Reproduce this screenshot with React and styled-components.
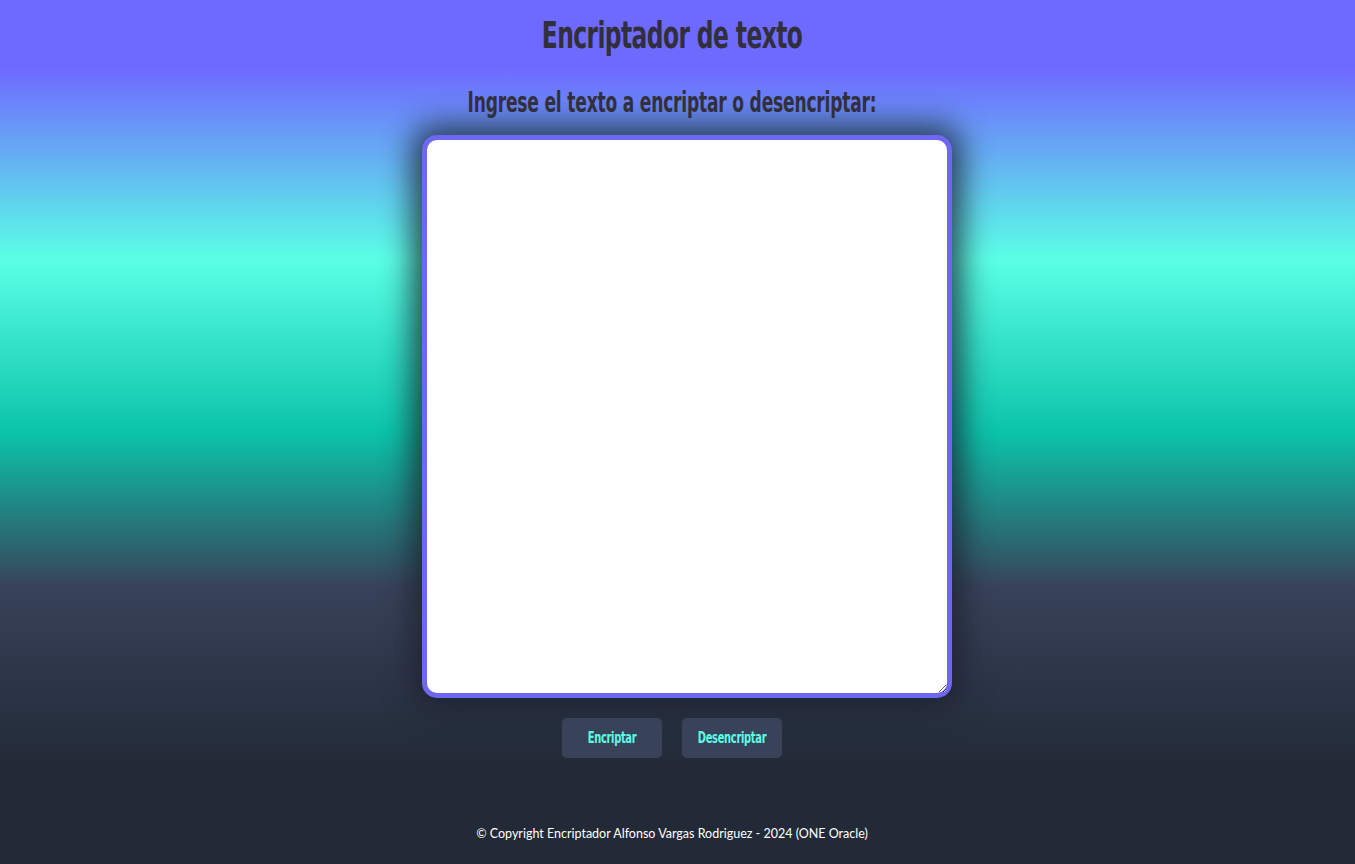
import React, { useState } from 'react'
import styled, { createGlobalStyle } from 'styled-components'

const GlobalStyle = createGlobalStyle`
  html, body {
    margin: 0;
    padding: 0;
  }
  body {
    min-height: 864px;
    background: linear-gradient(
      180deg,
      #6f6aff 0%,
      #6f6aff 8%,
      #5affe5 30%,
      #0bc4aa 50%,
      #384259 68%,
      #222a37 89%,
      #222a37 100%
    );
    background-attachment: fixed;
    font-family: "Lato", "Open Sans", sans-serif;
  }
`

const Page = styled.main`
  display: flex;
  flex-direction: column;
  align-items: center;
  min-height: 864px;
  box-sizing: border-box;
  padding: 14px 11px 0 0;
`

const Title = styled.h1`
  margin: 0;
  font-family: "DejaVu Sans Condensed", sans-serif;
  font-weight: 700;
  font-size: 26px;
  line-height: 42px;
  color: #302f3b;
  letter-spacing: -0.6px;
  transform: scaleY(1.42);
`

const Subtitle = styled.h2`
  margin: 30px 0 0;
  font-family: "DejaVu Sans Condensed", sans-serif;
  font-weight: 700;
  font-size: 19px;
  line-height: 32px;
  color: #302f3b;
  letter-spacing: -0.2px;
  transform: scaleY(1.45);
`

const TextBox = styled.textarea`
  margin: 17px 0 0 30px;
  width: 530px;
  height: 563px;
  box-sizing: border-box;
  border: 5px solid #6d67f2;
  border-radius: 15px;
  background: #fff;
  padding: 10px;
  font-family: "Lato", sans-serif;
  font-size: 16px;
  box-shadow: 0 0 30px 10px rgba(28, 32, 48, 0.8);
  outline: none;
`

const Actions = styled.div`
  display: flex;
  gap: 20px;
  margin-top: 20px;
`

const Button = styled.button`
  width: 100px;
  height: 40px;
  border: none;
  border-radius: 5px;
  background: #384259;
  color: #5affe5;
  font-family: "DejaVu Sans Condensed", sans-serif;
  font-weight: 700;
  font-size: 11px;
  letter-spacing: -0.3px;
  cursor: pointer;

  span {
    display: inline-block;
    transform: scaleY(1.4);
  }
`

const Footer = styled.footer`
  margin-top: 68px;
  color: #ffffff;
  font-family: "Lato", sans-serif;
  font-size: 12.5px;
  font-weight: 400;
`

export default function App() {
  const [text, setText] = useState('')

  return (
    <>
      <GlobalStyle />
      <Page>
        <Title>Encriptador de texto</Title>
        <Subtitle>Ingrese el texto a encriptar o desencriptar:</Subtitle>
        <TextBox value={text} onChange={e => setText(e.target.value)} />
        <Actions>
          <Button><span>Encriptar</span></Button>
          <Button><span>Desencriptar</span></Button>
        </Actions>
        <Footer>© Copyright Encriptador Alfonso Vargas Rodriguez - 2024 (ONE Oracle)</Footer>
      </Page>
    </>
  )
}
